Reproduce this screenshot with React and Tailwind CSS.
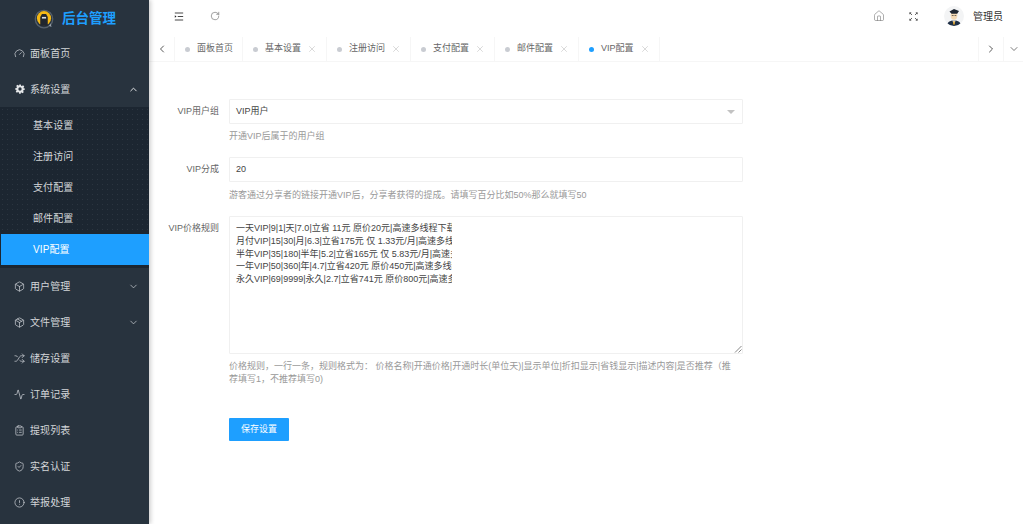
import React from "react";
import { Gauge, ChevronUp, ChevronDown, ChevronLeft, ChevronRight, Box, Package, Shuffle, Activity, ClipboardList, ShieldCheck, CircleAlert, X, Home, RotateCw } from "lucide-react";

function CogIcon() {
  return (
    <svg viewBox="0 0 24 24" className="w-[10px] h-[10px]" fill="#e4e6e8">
      <path fillRule="evenodd" d="M10 1h4l.7 3.2 1.9.8 2.8-1.8 2.8 2.8-1.8 2.8.8 1.9L23.400 10v4l-3.200.7-.8 1.900 1.800 2.800-2.800 2.800-2.800-1.800-1.900.8L14 23.400h-4l-.7-3.200-1.900-.8-2.800 1.800-2.800-2.800 1.800-2.800-.8-1.900L.6 14v-4l3.200-.7.8-1.900L2.800 4.600 5.600 1.800l2.800 1.800 1.900-.8zM12 8a4 4 0 1 0 0 8 4 4 0 0 0 0-8z" />
    </svg>
  );
}

function Logo() {
  return (
    <svg viewBox="0 0 24 24" className="w-[20px] h-[20px]">
      <circle cx="12" cy="12" r="10.500" fill="none" stroke="#56616c" strokeWidth="1.500" />
      <circle cx="12" cy="11" r="8.500" fill="#f5b916" />
      <path d="M7.500 20V9.500L9.500 6h5l2 3.500V20z" fill="#20262e" />
      <path d="M9.500 9.500h5v2h-5z" fill="#d8dde2" />
      <path d="M18 20l3 1.500-1-4z" fill="#9aa3ac" />
    </svg>
  );
}

function Avatar() {
  return (
    <svg viewBox="0 0 20 20" className="w-[20px] h-[20px] rounded-full bg-[#f3f4f5]">
      <path d="M3 20c0-4 3-5.500 7-5.500s7 1.500 7 5.500z" fill="#1f2f46" />
      <path d="M8.300 14.500h3.400L10 18z" fill="#f4f4f4" />
      <path d="M9.500 15h1l.4 3.500h-1.800z" fill="#e0a020" />
      <ellipse cx="10" cy="9.500" rx="3.300" ry="4.200" fill="#f3d9b5" />
      <path d="M5.500 5.500L10 3l5 2-1.800 2.800H7.500z" fill="#1d2530" />
      <path d="M7.800 9.500h1.800M10.500 9.500h1.800" stroke="#333" strokeWidth=".7" />
    </svg>
  );
}

function IndentIcon() {
  return (
    <svg viewBox="0 0 12 10" className="w-[10px] h-[9px]" fill="none" stroke="#222" strokeWidth="1">
      <path d="M1 .8h10M4.500 5h6.500M1 9.200h10" />
      <path d="M1 3.400L3 5 1 6.600z" fill="#222" stroke="none" />
    </svg>
  );
}

function ExpandIcon() {
  return (
    <svg viewBox="0 0 12 12" className="w-[9px] h-[9px]" fill="none" stroke="#555" strokeWidth="1.200">
      <path d="M1 1l3 3M1 1h2M1 1v2M11 1L8 4M11 1H9M11 1v2M1 11l3-3M1 11h2M1 11V9M11 11L8 8M11 11H9M11 11V9" />
    </svg>
  );
}

const ic = { size: 11, strokeWidth: 1.6, color: "#c9ced3" };

function MenuItem({ icon, label, arrow }) {
  return (
    <div className="h-9 flex items-center pl-[14px] pr-[10px] shrink-0">
      <span className="w-[11px] h-[11px] flex items-center justify-center">{icon}</span>
      <span className="ml-[5px] text-[10px] text-[#d3d6d9] tracking-[0.1px]">{label}</span>
      {arrow === "down" && <ChevronDown className="ml-auto" size={11} color="#c9ced3" strokeWidth={1.6} />}
      {arrow === "up" && <ChevronUp className="ml-auto" size={11} color="#f0f1f2" strokeWidth={2} />}
    </div>
  );
}

function SubItem({ label, active }) {
  return (
    <div className={`h-[31px] flex items-center text-[10px] tracking-[0.1px] ${active ? "ml-px bg-[#1e9fff] text-white pl-[32px]" : "pl-[33px] text-[#d3d6d9]"}`}>
      {label}
    </div>
  );
}

function Tab({ label, active, closable = true, width }) {
  return (
    <div className={`h-full flex items-center pl-[10px] border-r border-[#f6f6f6] shrink-0 ${width}`}>
      <span className={`w-[5px] h-[5px] rounded-full ${active ? "bg-[#1e9fff]" : "bg-[#c9ccd2]"}`} />
      <span className="ml-[7px] text-[9px] text-[#666]">{label}</span>
      {closable && <X className="ml-[6px]" size={10} color="#b5b5b5" strokeWidth={1.2} />}
    </div>
  );
}

function Row({ label, children }) {
  return (
    <div className="flex">
      <div className="w-[70px] text-right text-[9px] text-[#666] leading-[24px] shrink-0">{label}</div>
      <div className="ml-[10px] w-[514px]">{children}</div>
    </div>
  );
}

function Hint({ children, className = "" }) {
  return <div className={`text-[9px] text-[#999] leading-[13px] ${className}`}>{children}</div>;
}

export default function App() {
  return (
    <div className="h-screen w-full flex overflow-hidden bg-white font-['Liberation_Sans','Noto_Sans_CJK_SC',sans-serif]">
      <aside className="w-[149px] shrink-0 bg-[#28333e] flex flex-col shadow-[2px_0_4px_rgba(0,0,0,0.18)] z-10">
        <div className="h-[35px] flex items-center pl-[34px] pt-[3px] shrink-0">
          <Logo />
          <span className="ml-[8px] text-[13.500px] font-bold text-[#1e9fff]">后台管理</span>
        </div>
        <div>
          <MenuItem icon={<Gauge {...ic} />} label="面板首页" />
          <MenuItem icon={<CogIcon />} label="系统设置" arrow="up" />
          <div className="py-[3px] bg-[#1c2631] bg-[radial-gradient(#2b3540_0.5px,transparent_0.5px)] bg-[length:5px_5px]">
            <SubItem label="基本设置" />
            <SubItem label="注册访问" />
            <SubItem label="支付配置" />
            <SubItem label="邮件配置" />
            <SubItem label="VIP配置" active />
          </div>
          <MenuItem icon={<Box {...ic} />} label="用户管理" arrow="down" />
          <MenuItem icon={<Package {...ic} />} label="文件管理" arrow="down" />
          <MenuItem icon={<Shuffle {...ic} />} label="储存设置" />
          <MenuItem icon={<Activity {...ic} />} label="订单记录" />
          <MenuItem icon={<ClipboardList {...ic} />} label="提现列表" />
          <MenuItem icon={<ShieldCheck {...ic} />} label="实名认证" />
          <MenuItem icon={<CircleAlert {...ic} />} label="举报处理" />
        </div>
      </aside>
      <main className="flex-1 min-w-0 flex flex-col">
        <header className="h-[36px] flex items-center shrink-0 pl-[25px] pb-[4px]">
          <IndentIcon />
          <RotateCw className="ml-[26px]" size={10} color="#555" strokeWidth={1.3} />
          <Home className="ml-auto" size={12} color="#777" strokeWidth={1.2} />
          <span className="ml-[24px]"><ExpandIcon /></span>
          <span className="ml-[26px]"><Avatar /></span>
          <span className="ml-[9px] mr-[20px] text-[10px] text-[#333]">管理员</span>
        </header>
        <div className="h-[26px] flex items-center border-b border-[#f6f6f6] shrink-0 pt-px">
          <div className="w-[26px] h-full flex items-center justify-center border-r border-[#f6f6f6] shrink-0">
            <ChevronLeft size={12} color="#222" strokeWidth={1.500} />
          </div>
          <Tab label="面板首页" closable={false} width="w-[68px]" />
          <Tab label="基本设置" width="w-[84px]" />
          <Tab label="注册访问" width="w-[84px]" />
          <Tab label="支付配置" width="w-[84px]" />
          <Tab label="邮件配置" width="w-[84px]" />
          <Tab label="VIP配置" active width="w-[81px]" />
          <div className="ml-auto w-[25px] h-full flex items-center justify-center border-l border-[#f6f6f6]">
            <ChevronRight size={12} color="#222" strokeWidth={1.500} />
          </div>
          <div className="w-[20px] h-full flex items-center justify-center border-l border-[#f6f6f6]">
            <ChevronDown size={12} color="#222" strokeWidth={1.200} />
          </div>
        </div>
        <div className="pt-[37px]">
          <Row label="VIP用户组">
            <div className="h-[25px] border border-[#f0f0f0] rounded-[1px] flex items-center pl-[6px] pr-[7px] text-[9px] text-[#444]">
              <span>VIP用户</span>
              <span className="ml-auto w-0 h-0 border-x-[4px] border-x-transparent border-t-[4px] border-t-[#c2c2c2]" />
            </div>
            <Hint className="mt-[6px]">开通VIP后属于的用户组</Hint>
          </Row>
          <div className="h-[14px]" />
          <Row label="VIP分成">
            <div className="h-[25px] border border-[#f0f0f0] rounded-[1px] flex items-center pl-[6px] text-[9px] text-[#444]">20</div>
            <Hint className="mt-[7px]">游客通过分享者的链接开通VIP后，分享者获得的提成。请填写百分比如50%那么就填写50</Hint>
          </Row>
          <div className="h-[14px]" />
          <Row label="VIP价格规则">
            <div className="relative h-[138px] border border-[#f0f0f0] rounded-[1px] pl-[6px] pt-[5px] text-[9px] text-[#444] leading-[12.800px]">
              <div className="w-[216px] overflow-hidden whitespace-nowrap">
                <div>一天VIP|9|1|天|7.0|立省 11元 原价20元|高速多线程下载</div>
                <div>月付VIP|15|30|月|6.3|立省175元 仅 1.33元/月|高速多线程</div>
                <div>半年VIP|35|180|半年|5.2|立省165元 仅 5.83元/月|高速多线程</div>
                <div>一年VIP|50|360|年|4.7|立省420元 原价450元|高速多线程</div>
                <div>永久VIP|69|9999|永久|2.7|立省741元 原价800元|高速多线程</div>
              </div>
              <svg viewBox="0 0 8 8" className="absolute right-0 bottom-0 w-[8px] h-[8px]" stroke="#555" strokeWidth=".7">
                <path d="M7.500 1L1 7.500M7.500 4.500L4.500 7.500" />
              </svg>
            </div>
            <Hint className="mt-[6px] w-[508px]">价格规则，一行一条，规则格式为： 价格名称|开通价格|开通时长(单位天)|显示单位|折扣显示|省钱显示|描述内容|是否推荐（推荐填写1，不推荐填写0)</Hint>
          </Row>
          <div className="ml-[80px] mt-[32px] w-[60px] h-[23px] bg-[#1e9fff] rounded-[1px] flex items-center justify-center text-[9px] text-white">保存设置</div>
        </div>
      </main>
    </div>
  );
}
